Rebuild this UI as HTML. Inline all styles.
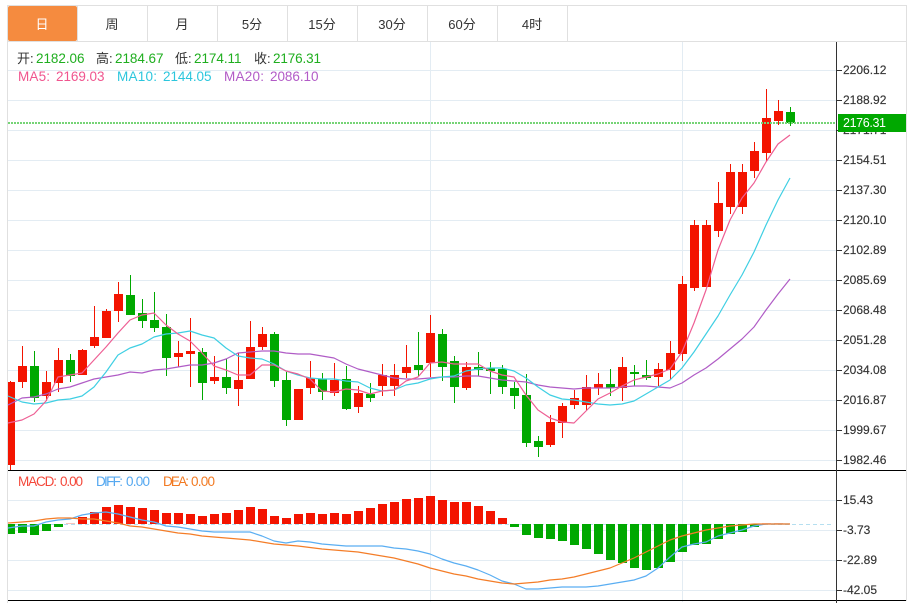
<!DOCTYPE html>
<html><head><meta charset="utf-8"><style>
html,body{margin:0;padding:0;background:#fff;width:913px;height:603px;overflow:hidden}
svg{display:block;position:absolute;left:0;top:0}
text{font-family:"Liberation Sans","Noto Sans CJK SC",sans-serif;font-size:12px;fill:#333}
.t{font-size:13px;text-anchor:middle;fill:#333}
.h{font-size:13.5px}
.g{fill:#1fae1f}
.a{stroke:#333;stroke-width:.15px}
</style></head><body>
<svg width="913" height="603" viewBox="0 0 913 603" xmlns="http://www.w3.org/2000/svg">
<rect width="913" height="603" fill="#fff"/>
<!-- grid -->
<path stroke="#e3ecf3" stroke-width="1" fill="none" d="M8 70.5H836M8 100.5H836M8 130.5H836M8 160.5H836M8 190.5H836M8 220.5H836M8 250.5H836M8 280.5H836M8 310.5H836M8 340.5H836M8 370.5H836M8 400.5H836M8 430.5H836M8 460.5H836M8 500.5H836M8 530.5H836M8 560.5H836M8 590.5H836M430.5 42V602M682.5 42V602"/>
<!-- tabs -->
<path stroke="#e0e0e0" stroke-width="1" fill="none" d="M7 5.5H907M7 41.5H907M7.5 5V603M906.5 5V601M77.5 6V41M147.5 6V41M217.5 6V41M287.5 6V41M357.5 6V41M427.5 6V41M497.5 6V41M567.5 6V41"/>
<rect x="8" y="6" width="69" height="35" rx="2" fill="#f58b3f"/>
<text class="t" x="42" y="29" style="fill:#fff">日</text>
<text class="t" x="112" y="29">周</text>
<text class="t" x="182" y="29">月</text>
<text class="t" x="252" y="29">5分</text>
<text class="t" x="322" y="29">15分</text>
<text class="t" x="392" y="29">30分</text>
<text class="t" x="462" y="29">60分</text>
<text class="t" x="532" y="29">4时</text>
<!-- legend -->
<text class="h" x="17" y="63" style="font-size:13px">开:</text><text class="h g" x="36" y="63" textLength="48.5">2182.06</text>
<text class="h" x="96" y="63" style="font-size:13px">高:</text><text class="h g" x="115" y="63" textLength="48.5">2184.67</text>
<text class="h" x="175" y="63" style="font-size:13px">低:</text><text class="h g" x="194" y="63" textLength="47.5">2174.11</text>
<text class="h" x="254" y="63" style="font-size:13px">收:</text><text class="h g" x="273" y="63" textLength="48">2176.31</text>
<text class="h" x="18" y="81" style="fill:#f0558e" textLength="32">MA5:</text><text class="h" x="56" y="81" style="fill:#f0558e" textLength="48.5">2169.03</text>
<text class="h" x="117" y="81" style="fill:#2cc6dd" textLength="40">MA10:</text><text class="h" x="163" y="81" style="fill:#2cc6dd" textLength="48.5">2144.05</text>
<text class="h" x="224" y="81" style="fill:#b25bc7" textLength="40">MA20:</text><text class="h" x="270" y="81" style="fill:#b25bc7" textLength="48.5">2086.10</text>
<text class="h" x="18" y="486" style="fill:#f4483a" textLength="39">MACD:</text><text class="h" x="60" y="486" style="fill:#f4483a" textLength="23">0.00</text>
<text class="h" x="96" y="486" style="fill:#55a8f0" textLength="27">DIFF:</text><text class="h" x="126" y="486" style="fill:#55a8f0" textLength="24">0.00</text>
<text class="h" x="163" y="486" style="fill:#f27a22" textLength="26">DEA:</text><text class="h" x="191" y="486" style="fill:#f27a22" textLength="24">0.00</text>
<!-- candles -->
<path fill="#f31400" d="M8 382h7v83h-7zM10 381h1V470h-1zM18 366h9V382h-9zM22 346h1V388h-1zM42 382h9V396h-9zM46 371h1V401h-1zM54 360h9V383h-9zM58 348h1V392h-1zM78 350h9V375h-9zM82 349h1V375h-1zM90 337h9V346h-9zM94 306h1V348h-1zM102 311h9V338h-9zM106 309h1V338h-1zM114 294h9V311h-9zM118 282h1V322h-1zM174 353h9V357h-9zM178 341h1V367h-1zM186 351h9V354h-9zM190 318h1V387h-1zM210 377h9V381h-9zM214 356h1V384h-1zM234 380h9V389h-9zM238 353h1V406h-1zM246 347h9V379h-9zM250 321h1V379h-1zM258 334h9V347h-9zM262 327h1V350h-1zM294 389h9V420h-9zM306 378h9V388h-9zM310 361h1V394h-1zM330 380h9V393h-9zM334 363h1V396h-1zM354 393h9V407h-9zM358 386h1V413h-1zM378 375h9V386h-9zM382 364h1V396h-1zM390 375h9V386h-9zM394 364h1V396h-1zM402 367h9V373h-9zM406 345h1V378h-1zM426 333h9V363h-9zM430 315h1V377h-1zM462 367h9V388h-9zM466 362h1V390h-1zM546 422h9V445h-9zM550 415h1V447h-1zM558 406h9V423h-9zM562 403h1V438h-1zM570 398h9V405h-9zM574 390h1V409h-1zM582 387h9V405h-9zM586 375h1V410h-1zM594 384h9V388h-9zM598 373h1V395h-1zM618 367h9V388h-9zM622 357h1V401h-1zM654 369h9V377h-9zM658 363h1V386h-1zM666 353h9V370h-9zM670 341h1V380h-1zM678 284h9V354h-9zM682 276h1V361h-1zM690 225h9V288h-9zM694 220h1V291h-1zM702 225h9V287h-9zM706 220h1V287h-1zM714 203h9V231h-9zM718 182h1V237h-1zM726 172h9V207h-9zM730 164h1V214h-1zM738 172h9V207h-9zM742 164h1V214h-1zM750 151h9V171h-9zM754 142h1V178h-1zM762 118h9V153h-9zM766 89h1V161h-1zM774 111h9V121h-9zM778 100h1V125h-1z"/>
<path fill="#00a800" d="M30 366h9V398h-9zM34 351h1V402h-1zM66 360h9V376h-9zM70 354h1V382h-1zM126 295h9V315h-9zM130 275h1V315h-1zM138 313h9V321h-9zM142 299h1V328h-1zM150 320h9V328h-9zM154 292h1V332h-1zM162 327h9V358h-9zM166 314h1V376h-1zM198 352h9V383h-9zM202 348h1V400h-1zM222 377h9V388h-9zM226 359h1V394h-1zM270 334h9V381h-9zM274 332h1V387h-1zM282 380h9V420h-9zM286 372h1V426h-1zM318 379h9V392h-9zM322 373h1V400h-1zM342 379h9V409h-9zM346 366h1V410h-1zM366 394h9V398h-9zM370 383h1V402h-1zM414 365h9V370h-9zM418 332h1V376h-1zM438 334h9V367h-9zM442 329h1V381h-1zM450 361h9V387h-9zM454 356h1V403h-1zM474 367h9V370h-9zM478 352h1V376h-1zM486 368h9V371h-9zM490 362h1V394h-1zM498 369h9V387h-9zM502 365h1V394h-1zM510 388h9V396h-9zM514 382h1V409h-1zM522 395h9V443h-9zM526 374h1V447h-1zM534 441h9V447h-9zM538 436h1V457h-1zM606 384h9V388h-9zM610 369h1V396h-1zM630 372h9V374h-9zM634 365h1V386h-1zM642 375h9V378h-9zM646 360h1V380h-1zM786 112h9V123h-9zM790 107h1V126h-1z"/>
<!-- MA lines -->
<g fill="none" stroke-width="1.2" stroke-linejoin="round">
<polyline stroke="#b05cc6" points="8,405 22,398 34,397 46,394 58,389 70,387 82,383 94,379 106,377 118,375 130,372 142,373 154,370 166,369 178,367 190,365 202,365 214,363 226,359 238,353 250,352 262,351 274,351 286,353 298,354 310,354 322,356 334,358 346,364 358,369 370,372 382,375 394,378 406,379 418,379 430,378 442,377 454,377 466,376 478,376 490,378 502,380 514,381 526,382 538,385 550,387 562,388 574,389 586,388 598,388 610,388 622,387 634,386 646,386 658,387 670,388 682,383 694,375 706,368 718,359 730,349 742,339 754,327 766,310 778,294 790,279"/>
<polyline stroke="#3fcfe3" points="8,396 22,402 34,404 46,403 58,400 70,399 82,396 94,387 106,372 118,355 130,348 142,344 154,337 166,334 178,333 190,331 202,335 214,338 226,348 238,356 250,358 262,359 274,364 286,371 298,375 310,378 322,379 334,379 346,381 358,382 370,388 382,391 394,390 406,385 418,383 430,379 442,377 454,376 466,371 478,369 490,368 502,368 514,371 526,378 538,387 550,395 562,399 574,400 586,402 598,404 610,405 622,404 634,401 646,394 658,387 670,380 682,368 694,352 706,334 718,316 730,295 742,275 754,252 766,225 778,200 790,178"/>
<polyline stroke="#ee5f94" points="8,423 22,420 34,414 46,401 58,377 70,375 82,373 94,360 106,347 118,333 130,320 142,315 154,313 166,325 178,334 190,341 202,353 214,366 226,370 238,375 250,375 262,365 274,365 286,371 298,374 310,379 322,391 334,392 346,389 358,390 370,394 382,391 394,390 406,381 418,377 430,363 442,362 454,364 466,364 478,364 490,371 502,375 514,377 526,395 538,410 550,418 562,422 574,423 586,411 598,399 610,393 622,386 634,380 646,377 658,374 670,369 682,352 694,323 706,290 718,250 730,220 742,198 754,183 766,162 778,144 790,135"/>
</g>
<!-- current price line -->
<path stroke="#76d476" stroke-width="2" stroke-dasharray="2 1" fill="none" d="M8 123H835"/>
<!-- MACD zero line -->
<path stroke="#b5dff0" stroke-width="1" stroke-dasharray="4 3" fill="none" d="M8 524.5H834"/>
<!-- MACD bars -->
<path fill="#00a800" d="M8 524h7v10h-7zM18 524h9v9h-9zM30 524h9v11h-9zM42 524h9v7h-9zM54 524h9v3h-9zM510 524h9v3h-9zM522 524h9v11h-9zM534 524h9v14h-9zM546 524h9v15h-9zM558 524h9v17h-9zM570 524h9v21h-9zM582 524h9v25h-9zM594 524h9v30h-9zM606 524h9v36h-9zM618 524h9v39h-9zM630 524h9v44h-9zM642 524h9v46h-9zM654 524h9v44h-9zM666 524h9v38h-9zM678 524h9v28h-9zM690 524h9v21h-9zM702 524h9v20h-9zM714 524h9v15h-9zM726 524h9v10h-9zM738 524h9v8h-9zM750 524h9v3h-9z"/>
<path fill="#f31400" d="M78 517h9v7h-9zM90 512h9v12h-9zM102 507h9v17h-9zM114 505h9v19h-9zM126 507h9v17h-9zM138 508h9v16h-9zM150 510h9v14h-9zM162 513h9v11h-9zM174 513h9v11h-9zM186 514h9v10h-9zM198 516h9v8h-9zM210 514h9v10h-9zM222 513h9v11h-9zM234 510h9v14h-9zM246 507h9v17h-9zM258 509h9v15h-9zM270 516h9v8h-9zM282 518h9v6h-9zM294 514h9v10h-9zM306 513h9v11h-9zM318 514h9v10h-9zM330 513h9v11h-9zM342 514h9v10h-9zM354 511h9v13h-9zM366 508h9v16h-9zM378 504h9v20h-9zM390 502h9v22h-9zM402 499h9v25h-9zM414 498h9v26h-9zM426 496h9v28h-9zM438 500h9v24h-9zM450 502h9v22h-9zM462 502h9v22h-9zM474 506h9v18h-9zM486 511h9v13h-9zM498 518h9v6h-9z"/>
<path fill="#f8c4bd" d="M66 523h9v1h-9zM762 523h9v1h-9zM774 523h9v1h-9z"/>
<g fill="none" stroke-width="1.2" stroke-linejoin="round">
<polyline stroke="#5aaef2" points="8,528 22,526 34,526 46,522 58,520 70,519 82,515 94,513 106,512 118,514 130,517 142,520 154,522 166,526 178,527 190,529 202,531 214,532 226,532 238,532 250,532 262,536 274,541 286,543 298,541 310,542 322,544 334,545 346,546 358,546 370,546 382,546 394,548 406,549 418,551 430,554 442,559 454,563 466,566 478,570 490,575 502,581 514,584 526,589 538,589 550,588 562,587 574,587 586,587 598,586 610,584 622,582 634,580 646,576 658,568 670,557 682,547 694,544 706,542 718,536 730,533 742,530 754,526 766,524 778,524 790,524"/>
<polyline stroke="#f47d28" points="8,523 22,522 34,521 46,519 58,518 70,518 82,519 94,519 106,521 118,523 130,526 142,527 154,529 166,531 178,533 190,534 202,536 214,537 226,538 238,539 250,540 262,542 274,544 286,545 298,546 322,549 346,551 358,552 370,554 382,556 394,558 406,561 418,564 430,568 442,571 454,574 466,576 478,579 490,581 502,583 514,584 526,583 538,582 550,580 562,579 574,577 586,574 598,571 610,568 622,563 634,558 646,552 658,546 670,540 682,536 694,533 706,530 718,528 730,526 742,525 754,524 766,524 778,524 790,524"/>
</g>
<!-- axes -->
<path stroke="#000" stroke-width="1" fill="none" d="M8 470.5H906M8 600.5H906"/>
<path stroke="#333" stroke-width="1" fill="none" d="M836.5 42V603M836 70.5h6M836 100.5h6M836 130.5h6M836 160.5h6M836 190.5h6M836 220.5h6M836 250.5h6M836 280.5h6M836 310.5h6M836 340.5h6M836 370.5h6M836 400.5h6M836 430.5h6M836 460.5h6M836 500.5h6M836 530.5h6M836 560.5h6M836 590.5h6"/>
<g>
<text class="a" x="843" y="74">2206.12</text>
<text class="a" x="843" y="104">2188.92</text>
<text class="a" x="843" y="134">2171.71</text>
<text class="a" x="843" y="164">2154.51</text>
<text class="a" x="843" y="194">2137.30</text>
<text class="a" x="843" y="224">2120.10</text>
<text class="a" x="843" y="254">2102.89</text>
<text class="a" x="843" y="284">2085.69</text>
<text class="a" x="843" y="314">2068.48</text>
<text class="a" x="843" y="344">2051.28</text>
<text class="a" x="843" y="374">2034.08</text>
<text class="a" x="843" y="404">2016.87</text>
<text class="a" x="843" y="434">1999.67</text>
<text class="a" x="843" y="464">1982.46</text>
<text class="a" x="843" y="504">15.43</text>
<text class="a" x="843" y="534">-3.73</text>
<text class="a" x="843" y="564">-22.89</text>
<text class="a" x="843" y="594">-42.05</text>
</g>
<rect x="838" y="114" width="68" height="18" fill="#00a800"/>
<text x="843" y="127" style="fill:#fff;font-size:12.5px" textLength="43">2176.31</text>
</svg>
</body></html>
